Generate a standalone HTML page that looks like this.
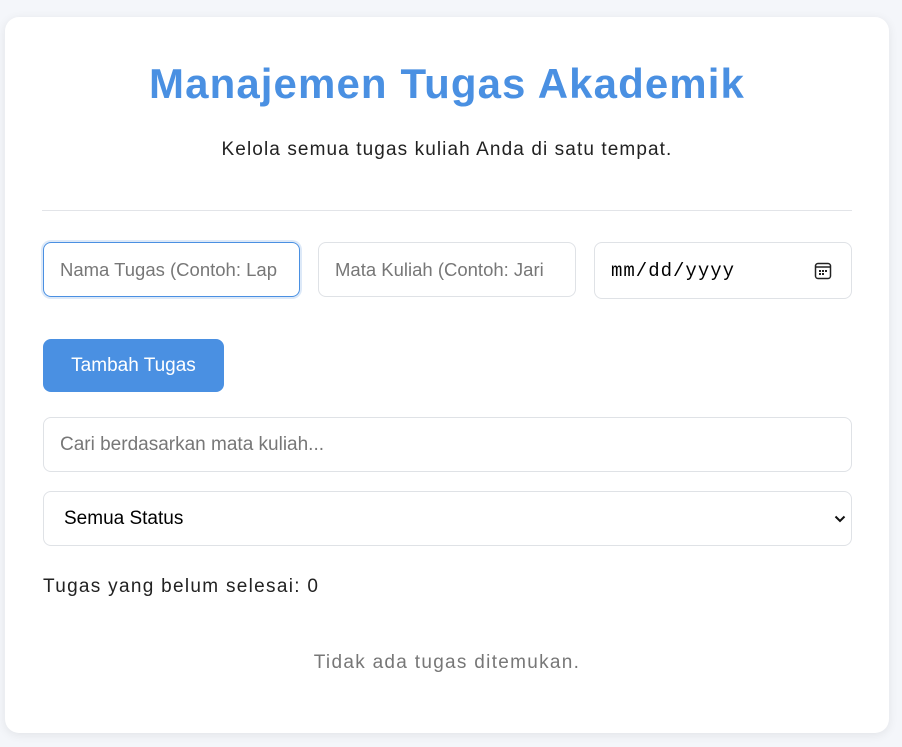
<!DOCTYPE html>
<html><head><style>
body{margin:0;background:#f4f6fa;width:902px;height:747px;position:relative;font-family:"Liberation Sans",sans-serif;overflow:hidden}
.card{position:absolute;left:5px;top:17px;width:884px;height:716px;background:#fff;border-radius:14px;box-shadow:0 2px 10px rgba(0,0,0,.08)}
.a{position:absolute;box-sizing:border-box}
h1{position:absolute;left:0;width:894px;top:60px;margin:0;text-align:center;color:#4a90e2;font-size:42px;font-weight:bold;letter-spacing:1.1px}
.sub{left:0;width:894px;top:139px;text-align:center;font-size:19px;color:#222;letter-spacing:1.1px}
.hr{left:42px;width:810px;top:210px;height:1px;background:#e2e4e8}
.in{border:1px solid #dfe2e6;border-radius:8px;height:55px;font-size:19px;color:#777;padding:16px 0 0 16px;white-space:nowrap;overflow:hidden}
.btn{left:43px;top:339px;width:181px;height:53px;background:#4a90e2;border-radius:8px;color:#fff;font-size:19px;text-align:center;line-height:53px}
</style></head><body>
<div class="card"></div>
<h1>Manajemen Tugas Akademik</h1>
<div class="a sub">Kelola semua tugas kuliah Anda di satu tempat.</div>
<div class="a hr"></div>
<div class="a in" style="left:43px;top:242px;width:257px;border:1px solid #4a90e2;box-shadow:0 0 0 2px #dde9f8;font-size:18.5px">Nama Tugas (Contoh: Lap</div>
<div class="a in" style="left:318px;top:242px;width:258px;font-size:18.5px">Mata Kuliah (Contoh: Jari</div>
<div class="a in" style="left:594px;top:242px;width:258px;height:57px;color:#000;font-family:'Liberation Mono',monospace;font-size:19px;padding-top:17px;letter-spacing:1px">mm/dd/yyyy
<svg style="position:absolute;left:219px;top:19px" width="18" height="18" viewBox="0 0 18 18"><rect x="1.5" y="1.5" width="15" height="15" rx="2.5" fill="none" stroke="#222" stroke-width="1.5"/><line x1="1.5" y1="5" x2="16.5" y2="5" stroke="#222" stroke-width="1.5"/><rect x="5" y="8" width="2" height="2" fill="#222"/><rect x="8" y="8" width="2" height="2" fill="#222"/><rect x="11" y="8" width="2" height="2" fill="#222"/><rect x="5" y="11" width="2" height="2" fill="#222"/><rect x="8" y="11" width="2" height="2" fill="#222"/></svg></div>
<div class="a btn">Tambah Tugas</div>
<div class="a in" style="left:43px;top:417px;width:809px;">Cari berdasarkan mata kuliah...</div>
<div class="a in" style="left:43px;top:491px;width:809px;color:#000;padding-left:20px">Semua Status
<svg style="position:absolute;left:790px;top:22px" width="12" height="10" viewBox="0 0 12 10"><path d="M1.5 2.5 L6 7 L10.5 2.5" fill="none" stroke="#111" stroke-width="2"/></svg></div>
<div class="a" style="left:43px;top:576px;font-size:19px;color:#222;letter-spacing:1.3px">Tugas yang belum selesai: 0</div>
<div class="a" style="left:0;width:894px;top:652px;text-align:center;font-size:19px;color:#777;letter-spacing:1.3px">Tidak ada tugas ditemukan.</div>
</body></html>
